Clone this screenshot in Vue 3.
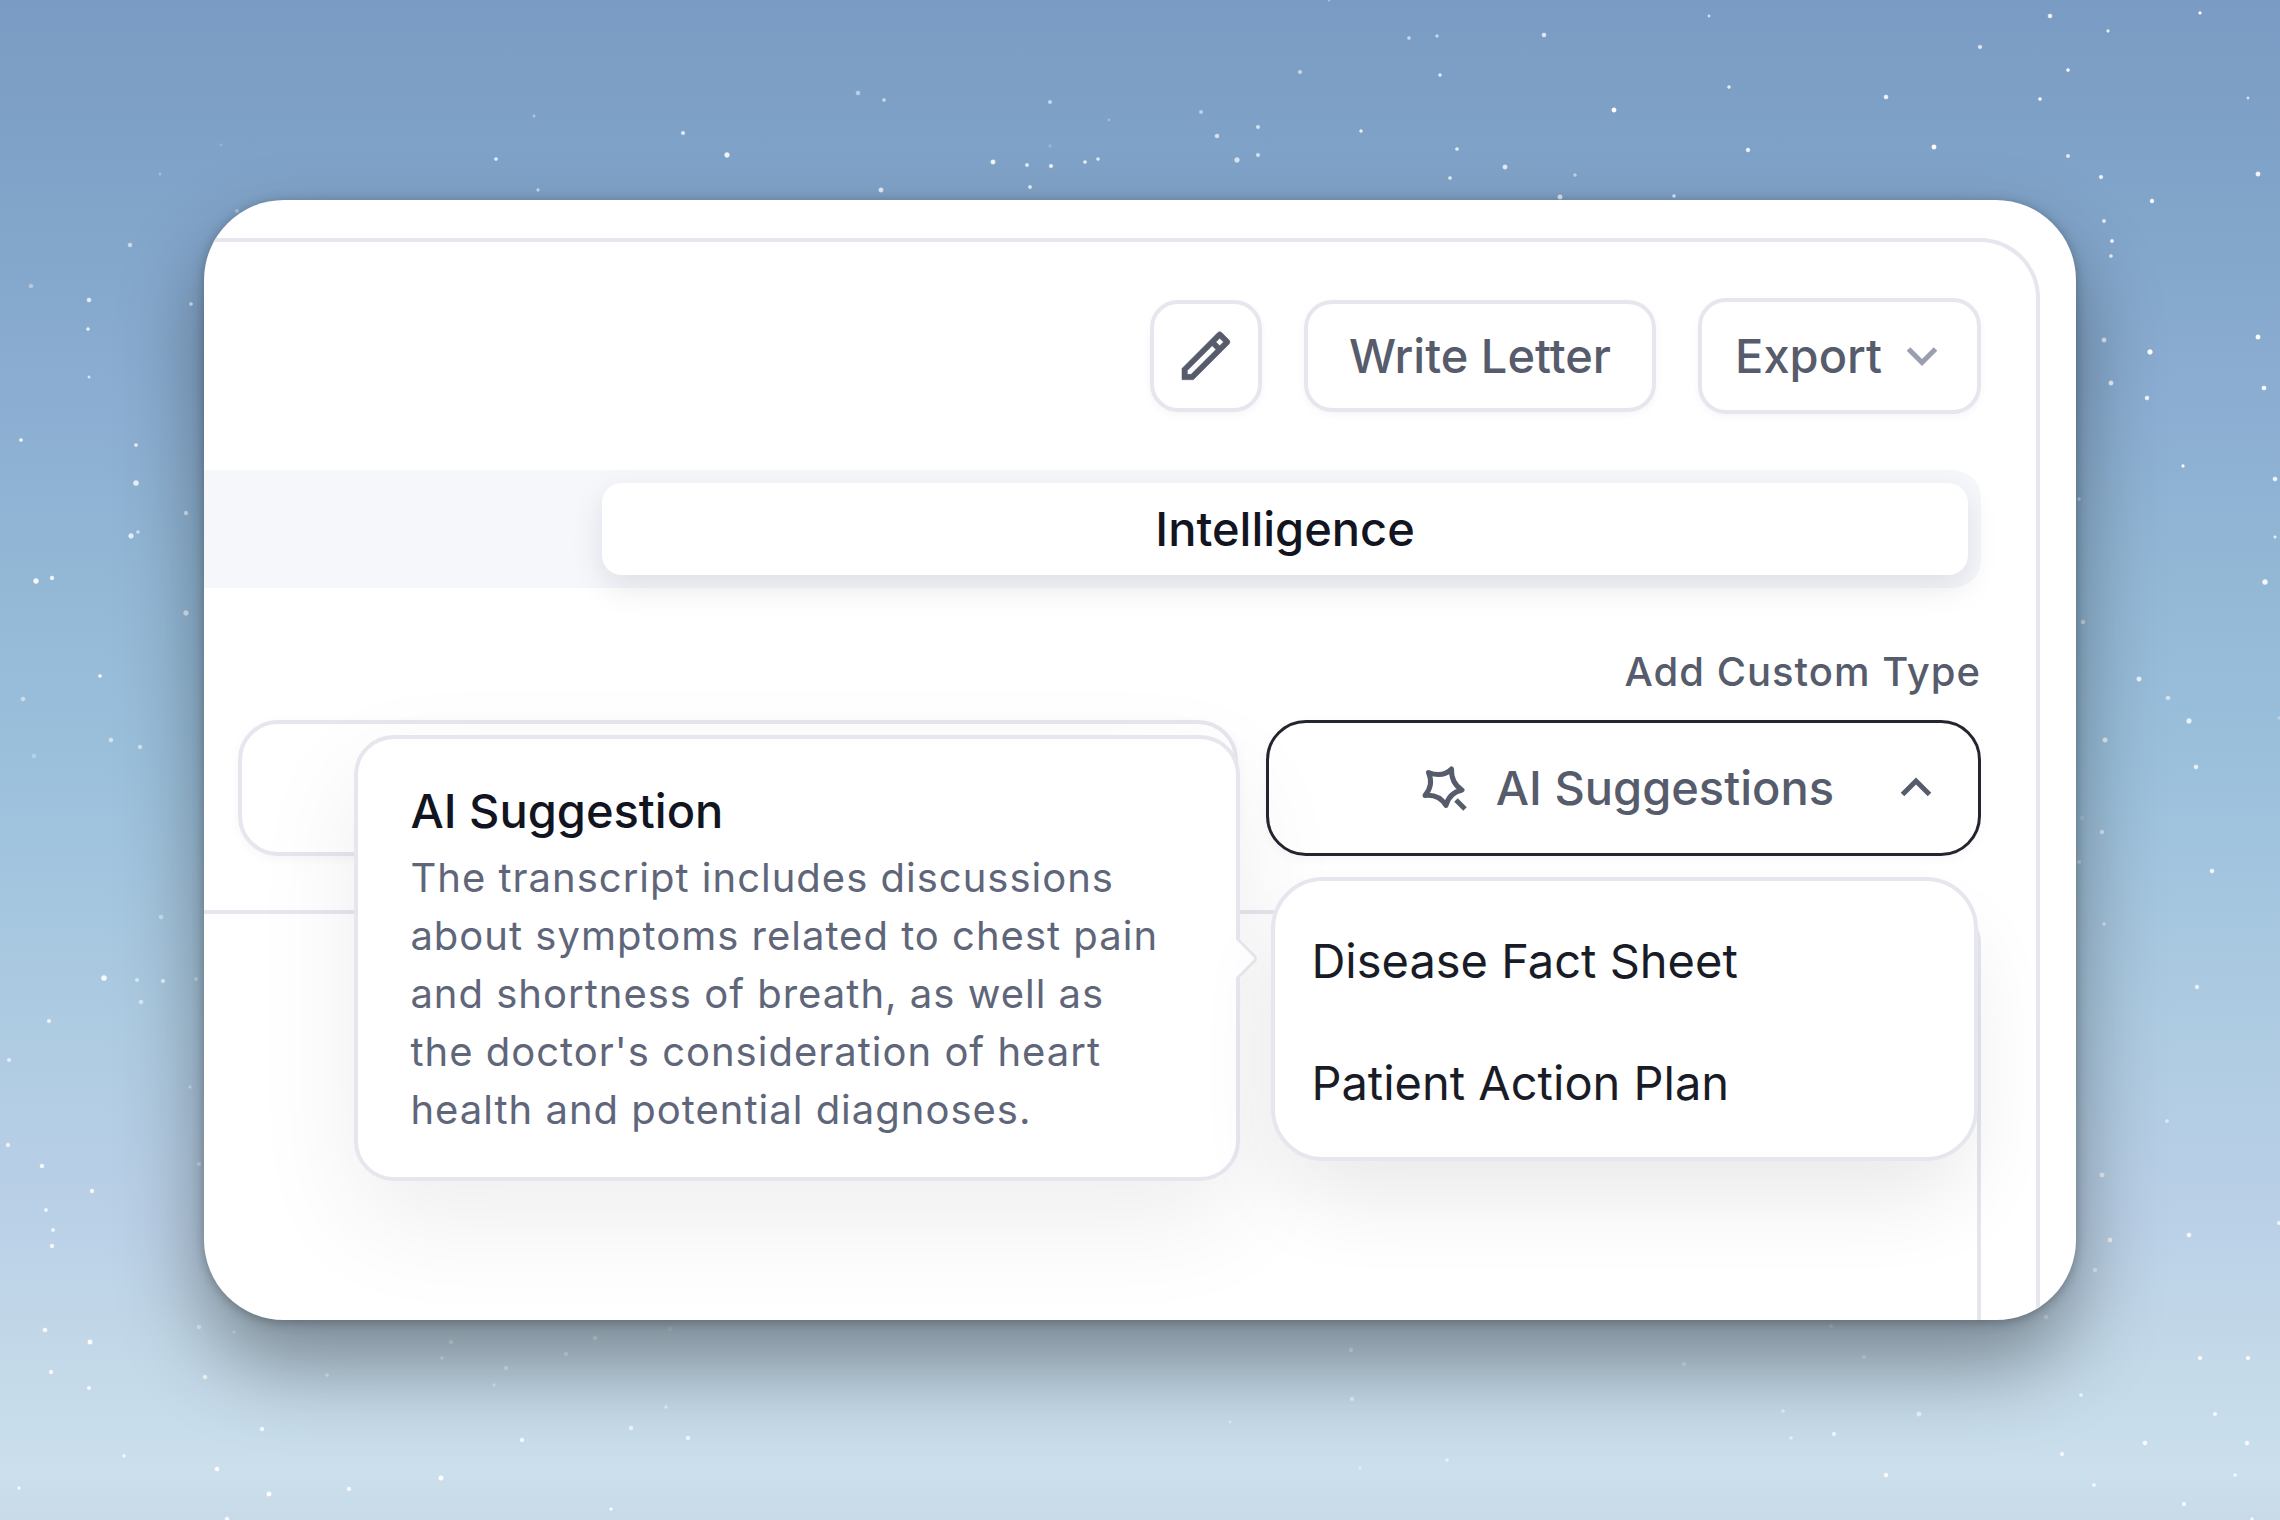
<script setup>
import { ref } from 'vue'

// x, y, radius, opacity of every snow speck
const specks = [
  [1709, 16, 1.2, 0.7], [2050, 16, 2, 0.9], [2200, 13, 1.4, 0.9], [2108, 31, 1.4, 0.8], [1980, 47, 1.8, 0.8],
  [1409, 38, 1.6, 0.6], [1437, 36, 1.4, 0.6], [1544, 35, 2, 0.8], [1300, 72, 1.8, 0.6], [1440, 75, 1.5, 0.8],
  [2068, 70, 1.6, 0.9], [1729, 87, 1.5, 0.8], [1886, 97, 2, 0.9], [2040, 99, 1.6, 0.9], [2248, 98, 1.2, 0.7],
  [858, 93, 2, 0.5], [884, 100, 1.6, 0.6], [1050, 102, 1.8, 0.6], [1201, 112, 1.8, 0.5], [1109, 120, 1.2, 0.3],
  [1614, 110, 2.2, 1], [534, 116, 1.2, 0.4], [1258, 127, 1.8, 0.7], [1217, 136, 2, 0.7], [1361, 131, 1.5, 0.8],
  [683, 133, 1.8, 0.8], [727, 155, 2.4, 0.9], [221, 145, 1.2, 0.2], [160, 174, 1.2, 0.3], [1050, 146, 1.6, 0.2],
  [496, 159, 1.6, 0.8], [993, 162, 2.2, 0.9], [1027, 165, 1.7, 0.8], [1051, 166, 1.8, 0.9], [1085, 162, 1.6, 0.8],
  [1098, 159, 1.5, 0.8], [1258, 155, 1.8, 0.7], [1237, 160, 2.4, 0.7], [1457, 149, 1.6, 0.8], [1748, 150, 1.9, 0.9],
  [1934, 147, 2.2, 1], [2068, 156, 1.7, 0.8], [1505, 167, 2.2, 0.8], [1450, 178, 1.6, 0.8], [1575, 175, 1.5, 0.5],
  [1030, 187, 1.7, 0.8], [881, 190, 2.2, 0.8], [538, 190, 1.4, 0.6], [1560, 197, 2.2, 0.8], [1674, 196, 1.5, 0.8],
  [2101, 177, 1.8, 0.9], [2258, 174, 2.2, 0.9], [2152, 201, 1.9, 1], [2104, 221, 1.7, 0.8], [1329, 0, 1.2, 0.4],
  [237, 211, 1.8, 0.4], [130, 245, 2, 0.6], [31, 286, 2, 0.4], [89, 300, 2, 0.8], [88, 329, 1.6, 0.8],
  [89, 377, 1.2, 0.7], [191, 304, 1.6, 0.7], [21, 440, 1.6, 0.9], [136, 445, 1.6, 0.8], [136, 483, 2.6, 0.8],
  [186, 513, 1.9, 0.7], [131, 536, 2.4, 0.8], [138, 532, 1.6, 0.6], [36, 581, 2.5, 0.9], [52, 578, 1.9, 0.9],
  [186, 613, 2.4, 0.7], [100, 676, 1.6, 0.9], [23, 699, 2, 0.5], [34, 756, 2, 0.3], [111, 740, 2, 0.6],
  [140, 747, 1.9, 0.6], [161, 917, 2, 0.5], [104, 978, 2.6, 0.9], [137, 980, 1.8, 0.6], [163, 981, 1.8, 0.8],
  [196, 979, 1.7, 0.5], [141, 1002, 2, 0.6], [49, 1021, 1.8, 0.8], [9, 1060, 1.8, 0.7], [190, 1087, 1.4, 0.5],
  [8, 1145, 1.9, 0.8], [42, 1166, 2, 0.9], [46, 1210, 1.7, 0.8], [199, 1164, 1.8, 0.6], [92, 1191, 1.9, 0.9],
  [53, 1230, 1.7, 0.8], [52, 1246, 1.9, 0.9], [2111, 256, 1.6, 0.8], [2112, 241, 1.7, 0.9], [2104, 340, 2.2, 0.7],
  [2111, 383, 2.2, 0.8], [2150, 352, 2.4, 1], [2147, 398, 2, 0.9], [2258, 337, 2.2, 1], [2264, 388, 2.1, 1],
  [2183, 466, 1.4, 0.9], [2275, 479, 2.1, 0.9], [2275, 537, 1.3, 0.8], [2265, 582, 2.5, 0.9], [2079, 499, 1.5, 0.5],
  [2083, 622, 2, 0.6], [2139, 679, 2.3, 0.8], [2168, 698, 2.1, 0.6], [2189, 721, 2.4, 0.8], [2105, 740, 2.3, 0.7],
  [2196, 767, 2, 0.8], [2082, 818, 2.2, 0.2], [2102, 832, 2.1, 0.6], [2079, 862, 1.8, 0.5], [2212, 871, 2, 0.9],
  [2104, 924, 1.5, 0.6], [2197, 987, 1.9, 0.8], [2279, 718, 1.4, 0.3], [2167, 1121, 1.6, 0.6], [2102, 1175, 2.2, 0.7],
  [2110, 1240, 2.2, 0.7], [2189, 1235, 2.1, 0.9], [2095, 1270, 1.9, 0.6], [2279, 1223, 1.8, 0.8], [45, 1330, 2, 0.9],
  [90, 1342, 2.2, 1], [199, 1327, 2, 0.6], [234, 1332, 1.4, 0.4], [51, 1372, 1.9, 0.9], [89, 1388, 1.8, 0.9],
  [205, 1377, 2, 0.8], [327, 1375, 1.5, 0.6], [451, 1342, 2, 0.5], [442, 1358, 1.5, 0.5], [566, 1354, 1.9, 0.5],
  [595, 1338, 2, 0.5], [670, 1329, 2, 0.3], [506, 1368, 1.9, 0.6], [494, 1385, 1.4, 0.5], [666, 1407, 1.6, 0.6],
  [631, 1428, 1.9, 0.8], [688, 1438, 1.9, 0.8], [522, 1440, 2, 0.9], [262, 1429, 2, 0.9], [124, 1456, 1.4, 0.8],
  [217, 1469, 2, 1], [441, 1478, 2.3, 1], [349, 1489, 1.9, 0.9], [269, 1494, 2.2, 1], [19, 1488, 1.5, 0.8],
  [611, 1509, 1.5, 0.9], [227, 1519, 2, 0.9], [1351, 1350, 1.9, 0.6], [1352, 1399, 1.9, 0.6], [1230, 1422, 1.4, 0.4],
  [1447, 1460, 1.6, 0.6], [1360, 1468, 1.5, 0.4], [1684, 1364, 1.8, 0.5], [1831, 1326, 1.7, 0.4], [1864, 1357, 1.7, 0.5],
  [1783, 1411, 1.6, 0.6], [1919, 1414, 2.2, 0.7], [1834, 1434, 1.9, 0.8], [1791, 1438, 1.6, 0.6], [1886, 1475, 2.1, 0.9],
  [2046, 1317, 2, 0.5], [2081, 1395, 1.6, 0.8], [2062, 1454, 1.9, 0.8], [2094, 1485, 1.7, 0.8], [2145, 1443, 2.1, 0.9],
  [2200, 1358, 1.9, 0.9], [2248, 1358, 1.9, 0.9], [2215, 1414, 1.8, 0.9], [2247, 1443, 2, 0.9], [2235, 1475, 1.6, 0.8],
  [2184, 1504, 1.8, 0.9], [2252, 1519, 1.6, 0.8],
]

const suggestions = ['Disease Fact Sheet', 'Patient Action Plan']
const menuOpen = ref(true)
</script>

<template>
  <main class="page">
    <svg class="snow" viewBox="0 0 2280 1520" preserveAspectRatio="xMidYMid slice" aria-hidden="true">
      <circle v-for="(s, i) in specks" :key="i" :cx="s[0]" :cy="s[1]" :r="s[2]" :opacity="s[3]" />
    </svg>

    <section class="card">
      <div class="frame">
        <header class="toolbar">
          <button type="button" class="btn btn-icon" aria-label="Edit">
            <svg class="pencil" viewBox="0 0 24 24" aria-hidden="true">
              <path
                d="M15.7279 9.57627L14.3137 8.16206L5 17.4758V18.89H6.41421L15.7279 9.57627ZM17.1421 8.16206L18.5563 6.74785L17.1421 5.33363L15.7279 6.74785L17.1421 8.16206ZM7.24264 20.89H3V16.6473L16.435 3.21231C16.8256 2.82179 17.4587 2.82179 17.8492 3.21231L20.6777 6.04074C21.0682 6.43126 21.0682 7.06443 20.6777 7.45495L7.24264 20.89Z"
              />
            </svg>
          </button>
          <button type="button" class="btn btn-text">Write Letter</button>
          <button type="button" class="btn btn-export">
            Export
            <svg class="chevron muted" viewBox="0 0 32 32" aria-hidden="true">
              <path d="M2.5 9L16 22.5L29.5 9" />
            </svg>
          </button>
        </header>

        <nav class="tabs">
          <button type="button" class="tab">Intelligence</button>
        </nav>

        <a href="#" class="custom-link">Add Custom Type</a>

        <div class="fields">
          <button type="button" class="field" aria-label="Type"></button>

          <div class="suggest">
            <button type="button" class="field field-active" :aria-expanded="menuOpen" @click="menuOpen = !menuOpen">
              <svg class="star" viewBox="20 24 48 48" aria-hidden="true">
                <path
                  d="M28.5 32.5Q43 38 51.5 29Q51 43 62 50Q49 53 46 65.5Q39 54 25 55.5Q34 45 28.5 32.5Z"
                  stroke-linejoin="round"
                />
                <path d="M56 60L65 69" />
              </svg>
              <span>AI Suggestions</span>
              <svg class="chevron" viewBox="0 0 32 32" aria-hidden="true">
                <path d="M2.5 22.5L16 9L29.5 22.5" />
              </svg>
            </button>

            <template v-if="menuOpen">
              <aside class="tooltip" role="tooltip">
                <h2>AI Suggestion</h2>
                <p>
                  The transcript includes discussions about symptoms related to chest pain and shortness of
                  breath, as well as the doctor's consideration of heart health and potential diagnoses.
                </p>
              </aside>
              <ul class="menu">
                <li v-for="item in suggestions" :key="item">
                  <button type="button" class="menu-item">{{ item }}</button>
                </li>
              </ul>
            </template>
          </div>
        </div>

        <div class="panel"></div>
      </div>
    </section>
  </main>
</template>

<style>
body {
  margin: 0;
}
</style>

<style scoped>
.page {
  --line: #e6e7ee;
  --ink: #12151f;
  --slate: #565c6b;
  --soft: #60667a;
  position: relative;
  display: grid;
  box-sizing: border-box;
  min-height: 100vh;
  padding: 200px 204px;
  font-family: Inter, "Liberation Sans", sans-serif;
  background: linear-gradient(
    #7a9cc4 0%,
    #82a5ca 15%,
    #8baed2 27%,
    #93b8d6 38%,
    #9bc0dc 50%,
    #adcbe2 67%,
    #bad0e7 80%,
    #c2d8e8 88%,
    #cbdfec 97%,
    #c8dae8 100%
  );
}

button {
  margin: 0;
  padding: 0;
  border: 0;
  background: none;
  font: inherit;
  color: inherit;
  cursor: pointer;
}

.snow {
  position: absolute;
  inset: 0;
  width: 100%;
  height: 100%;
}

.snow circle {
  fill: #fff;
  stroke: #fff;
  stroke-width: 0.5;
}

.card {
  position: relative;
  display: flex;
  overflow: hidden;
  box-sizing: border-box;
  padding: 38px 36px 0 0;
  border-radius: 80px;
  background: #fff;
  box-shadow:
    0 2px 12px rgba(0, 0, 0, 0.28),
    0 44px 84px rgba(0, 0, 0, 0.38);
}

.frame {
  display: flex;
  flex: 1;
  flex-direction: column;
  min-width: 0;
  padding: 56px 55px 0 0;
  border: solid var(--line);
  border-width: 4px 4px 0 0;
  border-top-right-radius: 60px;
}

.toolbar {
  display: flex;
  align-items: center;
  justify-content: flex-end;
  gap: 42px;
}

.btn {
  display: flex;
  align-items: center;
  justify-content: center;
  box-sizing: border-box;
  height: 112px;
  border: 4px solid var(--line);
  border-radius: 28px;
  background: #fff;
  color: var(--slate);
  font-size: 47px;
  font-weight: 500;
  line-height: 72px;
  white-space: nowrap;
  box-shadow: 0 3px 8px rgba(30, 30, 70, 0.04);
}

.btn-icon {
  width: 112px;
}

.btn-text {
  padding: 0 41px;
}

.btn-export {
  gap: 24px;
  height: 116px;
  padding: 0 39px 0 33px;
}

.pencil {
  width: 64px;
  height: 64px;
}

.pencil path {
  fill: currentColor;
  stroke: currentColor;
  stroke-width: 0.2;
}

.chevron {
  flex: none;
  width: 32px;
  height: 32px;
}

.chevron path,
.star path {
  fill: none;
  stroke: currentColor;
  stroke-width: 5;
}

.muted {
  color: #9a9fb0;
}

.tabs {
  display: flex;
  justify-content: flex-end;
  margin-top: 56px;
  padding: 13px;
  border-radius: 0 28px 28px 0;
  background: #f5f7fb;
}

.tab {
  flex: 0 0 78%;
  padding: 10px 0;
  border-radius: 20px;
  background: #fff;
  color: var(--ink);
  font-size: 47px;
  font-weight: 500;
  line-height: 72px;
  box-shadow: 0 12px 32px rgba(20, 20, 30, 0.1);
}

.custom-link {
  align-self: flex-end;
  margin-top: 56px;
  color: var(--slate);
  font-size: 40px;
  font-weight: 500;
  line-height: 56px;
  text-decoration: none;
  letter-spacing: 1px;
}

.fields {
  display: grid;
  grid-template-columns: 7fr 5fr;
  gap: 28px;
  margin: 20px 0 54px 34px;
}

.field {
  display: flex;
  align-items: center;
  justify-content: flex-end;
  box-sizing: border-box;
  width: 100%;
  height: 136px;
  border: 4px solid var(--line);
  border-radius: 40px;
  background: #fff;
  box-shadow: 0 3px 12px rgba(30, 30, 70, 0.04);
}

.field-active {
  gap: 28px;
  padding-right: 46px;
  border: 3px solid #23262f;
  color: var(--slate);
  font-size: 47px;
  font-weight: 500;
  line-height: 72px;
}

.field-active .chevron {
  margin-left: 38px;
}

.star {
  width: 48px;
  height: 48px;
}

.suggest {
  position: relative;
}

.tooltip {
  position: absolute;
  top: 15px;
  right: calc(100% + 26px);
  box-sizing: border-box;
  width: 886px;
  padding: 36px 64px 38px 52px;
  border: 4px solid var(--line);
  border-radius: 40px;
  background: #fff;
  box-shadow: 0 40px 110px rgba(0, 0, 0, 0.07);
}

.tooltip::after {
  content: "";
  position: absolute;
  top: 204px;
  right: -17px;
  width: 28px;
  height: 28px;
  border: solid var(--line);
  border-width: 3px 3px 0 0;
  border-top-right-radius: 6px;
  background: linear-gradient(45deg, transparent 50%, #fff 50%);
  transform: rotate(45deg);
}

.tooltip h2 {
  margin: 0 0 2px;
  color: var(--ink);
  font-size: 47px;
  font-weight: 500;
  line-height: 72px;
}

.tooltip p {
  margin: 0;
  color: var(--soft);
  font-size: 40px;
  line-height: 58px;
  letter-spacing: 1px;
}

.menu {
  position: absolute;
  top: calc(100% + 21px);
  right: 3px;
  left: 5px;
  margin: 0;
  padding: 19px 0 13px;
  border: 4px solid var(--line);
  border-radius: 52px;
  background: #fff;
  list-style: none;
  box-shadow: 0 48px 88px -12px rgba(0, 0, 0, 0.09);
}

.menu-item {
  width: 100%;
  padding: 25px 36px;
  color: #191c26;
  font-size: 47px;
  line-height: 72px;
  text-align: left;
}

.panel {
  flex: 1;
  min-height: 120px;
  border: solid var(--line);
  border-width: 4px 4px 0 0;
  border-top-right-radius: 32px;
}
</style>
